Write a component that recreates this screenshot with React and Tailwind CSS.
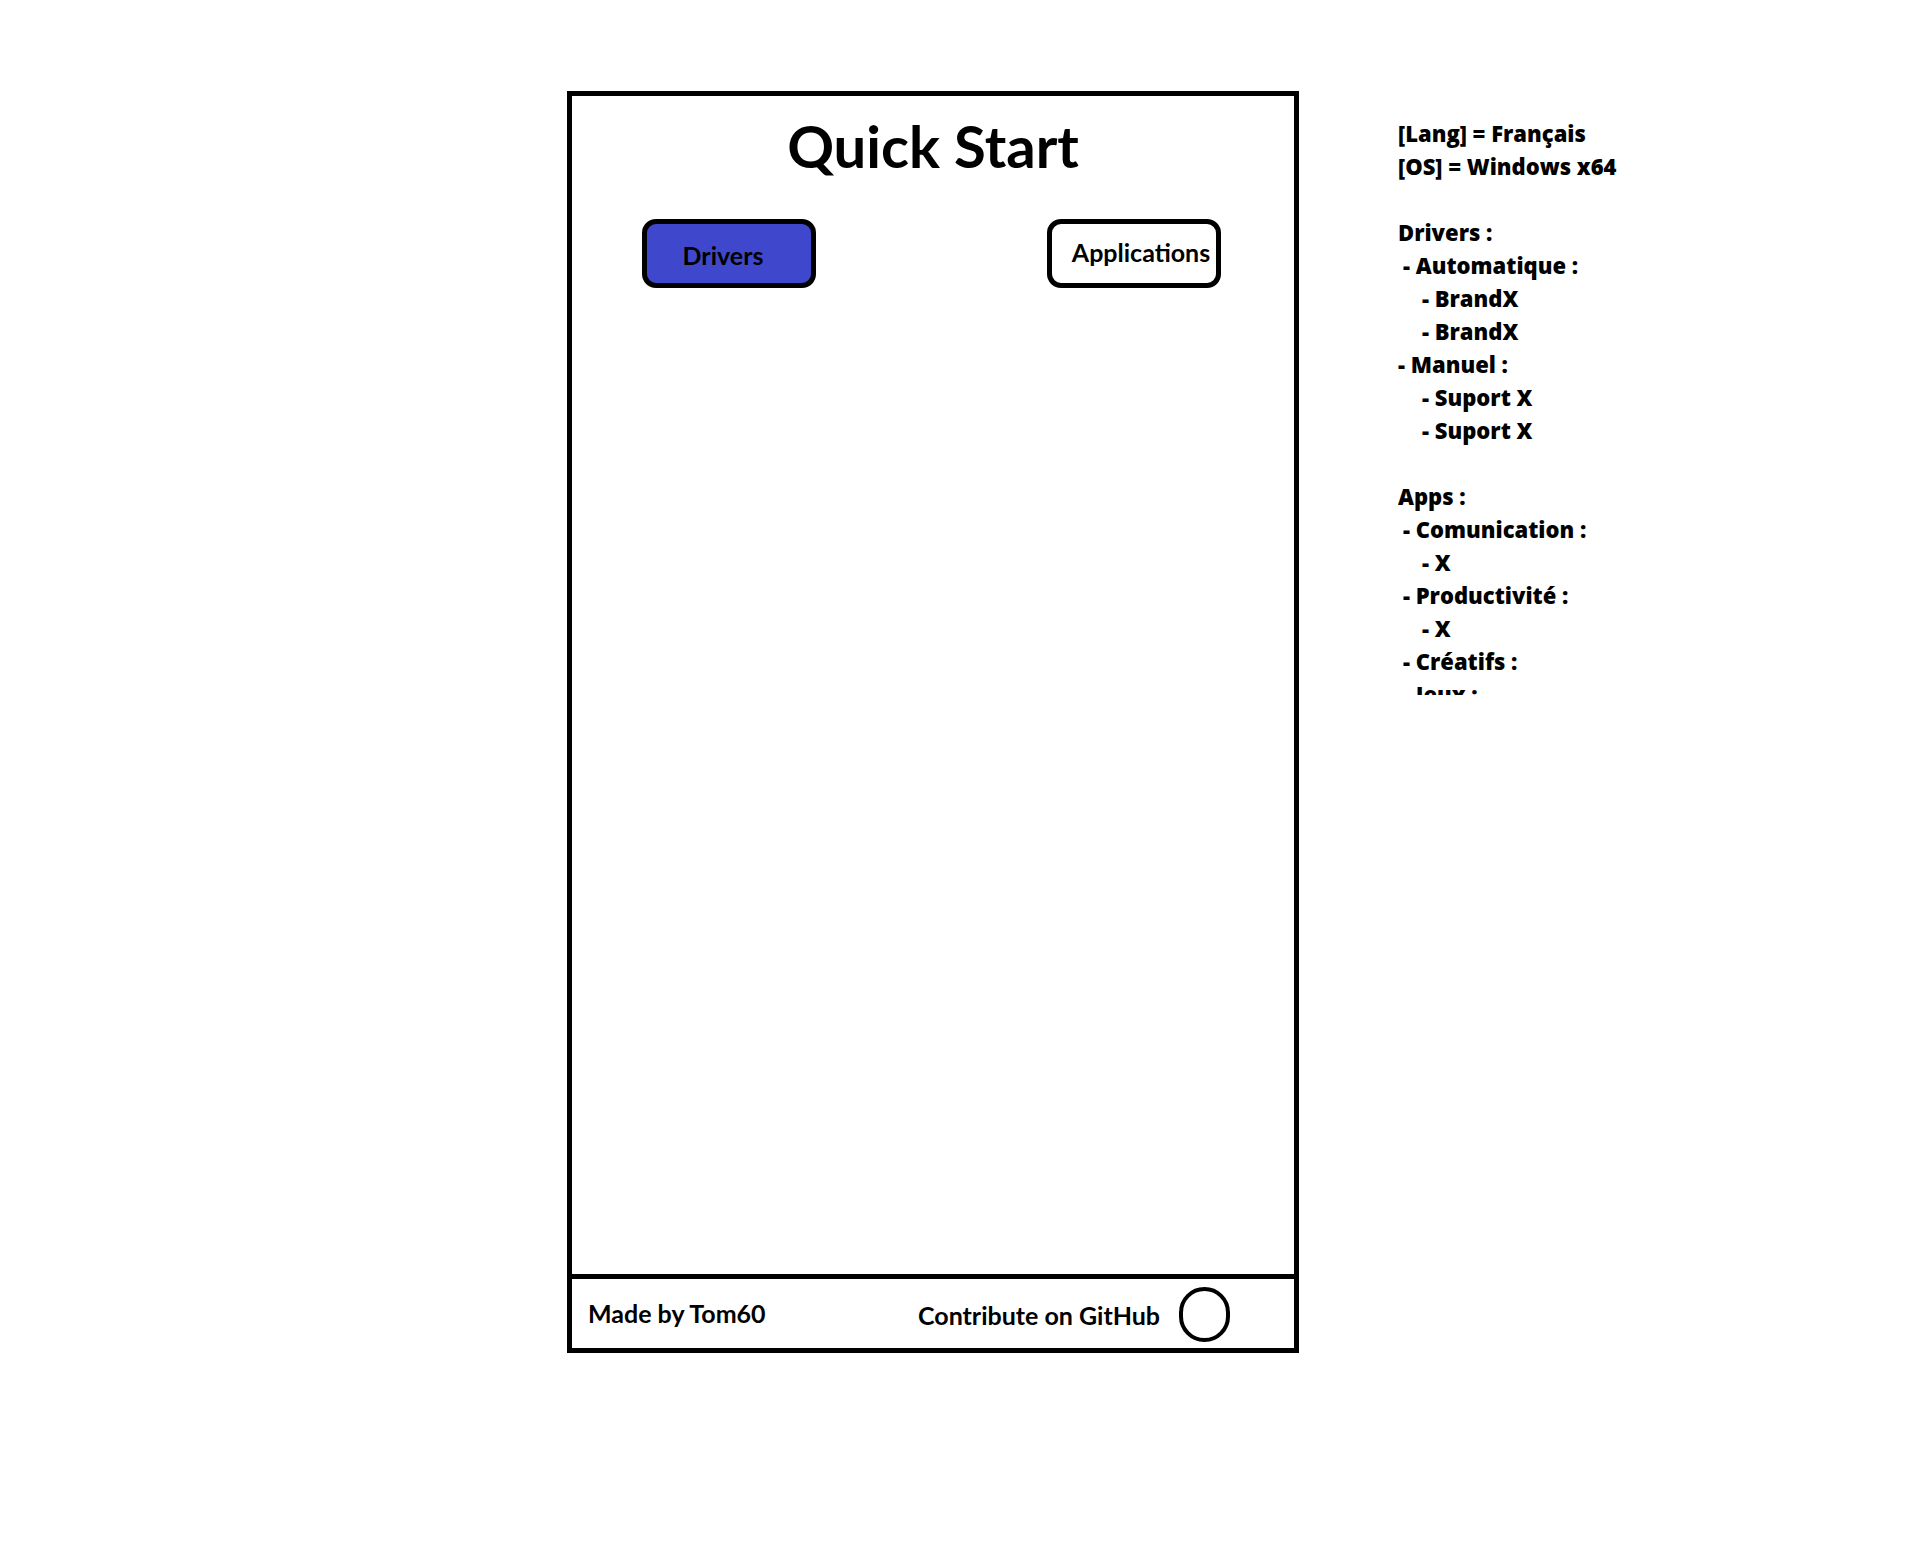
import React from 'react';

const notes = [
  { text: '[Lang] = Français', indent: 0 },
  { text: '[OS] = Windows x64', indent: 0 },
  { text: '', indent: 0 },
  { text: 'Drivers :', indent: 0 },
  { text: '- Automatique :', indent: 1 },
  { text: '- BrandX', indent: 2 },
  { text: '- BrandX', indent: 2 },
  { text: '- Manuel :', indent: 0 },
  { text: '- Suport X', indent: 2 },
  { text: '- Suport X', indent: 2 },
  { text: '', indent: 0 },
  { text: 'Apps :', indent: 0 },
  { text: '- Comunication :', indent: 1 },
  { text: '- X', indent: 2 },
  { text: '- Productivité :', indent: 1 },
  { text: '- X', indent: 2 },
  { text: '- Créatifs :', indent: 1 },
  { text: '- Jeux :', indent: 1 },
  { text: '- X', indent: 2 },
];

const indentClass = ['pl-0', 'pl-[5px]', 'pl-[24px]'];

const TabButton = ({ label, active }) => (
  <button
    className={`w-[174px] h-[69px] rounded-[14px] border-[5px] border-black flex items-center justify-center text-[25px] font-bold text-black ${
      active ? 'bg-[#3f48cc] pr-[12px] pt-[4px]' : 'bg-white pl-[14px] pb-[2px]'
    }`}
  >
    {label}
  </button>
);

export default function App() {
  return (
    <div className="min-h-[1544px] w-[1926px] bg-white text-black font-['Lato','Open_Sans',sans-serif] flex items-start">
      {/* --- MAIN WINDOW --- */}
      <div className="ml-[567px] mt-[91px] w-[732px] h-[1262px] border-[5px] border-black flex flex-col">
        <div className="flex-1 flex flex-col">
          <h1 className="pt-[21px] text-center text-[58px] leading-[58px] font-bold">Quick Start</h1>
          <div className="mt-[44px] pl-[70px] pr-[73px] flex justify-between items-start">
            <TabButton label="Drivers" active />
            <TabButton label="Applications" />
          </div>
        </div>

        {/* --- FOOTER --- */}
        <div className="h-[74px] border-t-[5px] border-black flex items-center pl-[16px]">
          <span className="w-[330px] text-[25px] font-bold">Made by Tom60</span>
          <span className="text-[25px] font-bold mt-[4px]">Contribute on GitHub</span>
          <div className="ml-[19px] mt-[2px] w-[51px] h-[55px] rounded-full border-[4px] border-black" />
        </div>
      </div>

      {/* --- NOTES --- */}
      <div className="ml-[99px] mt-[117px] h-[578px] overflow-hidden font-['Open_Sans','Lato',sans-serif]">
        {notes.map((n, i) => (
          <div key={i} className={`h-[33px] text-[22px] leading-[33px] font-extrabold whitespace-pre ${indentClass[n.indent]}`}>
            {n.text || ' '}
          </div>
        ))}
      </div>
    </div>
  );
}
